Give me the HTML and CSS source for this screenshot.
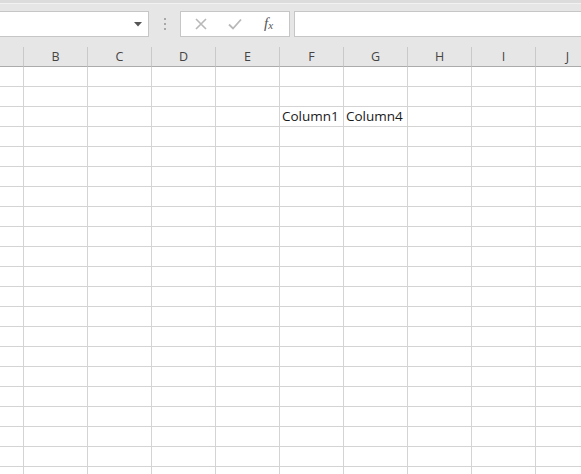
FILE: index.html
```html
<!DOCTYPE html>
<html>
<head>
<meta charset="utf-8">
<link rel="stylesheet" href="styles.css">
</head>
<body>
<div class="toolbar">
  <div class="namebox">
    <svg class="arrow" width="8" height="5" viewBox="0 0 8 5"><path d="M0 0H8L4 4.5Z" fill="#555"/></svg>
  </div>
  <div class="grip"><span></span><span></span><span></span></div>
  <div class="buttons">
    <svg class="btn" width="12" height="12" viewBox="0 0 12 12"><path d="M1 1L11 11M11 1L1 11" stroke="#b8b8b8" stroke-width="1.6" fill="none"/></svg>
    <svg class="btn" width="14" height="12" viewBox="0 0 14 12"><path d="M1 6.5L5 10.5L13 1.5" stroke="#b8b8b8" stroke-width="1.8" fill="none"/></svg>
    <span class="fx">f<sub>x</sub></span>
  </div>
  <div class="formula"></div>
</div>
<div class="sheet">
  <div class="h"></div><div class="h">B</div><div class="h">C</div><div class="h">D</div><div class="h">E</div><div class="h">F</div><div class="h">G</div><div class="h">H</div><div class="h">I</div><div class="h">J</div>
  <div class="c"></div><div class="c"></div><div class="c"></div><div class="c"></div><div class="c"></div><div class="c"></div><div class="c"></div><div class="c"></div><div class="c"></div><div class="c"></div>
  <div class="c"></div><div class="c"></div><div class="c"></div><div class="c"></div><div class="c"></div><div class="c"></div><div class="c"></div><div class="c"></div><div class="c"></div><div class="c"></div>
  <div class="c"></div><div class="c"></div><div class="c"></div><div class="c"></div><div class="c"></div><div class="c">Column1</div><div class="c">Column4</div><div class="c"></div><div class="c"></div><div class="c"></div>
  <div class="c"></div><div class="c"></div><div class="c"></div><div class="c"></div><div class="c"></div><div class="c"></div><div class="c"></div><div class="c"></div><div class="c"></div><div class="c"></div>
  <div class="c"></div><div class="c"></div><div class="c"></div><div class="c"></div><div class="c"></div><div class="c"></div><div class="c"></div><div class="c"></div><div class="c"></div><div class="c"></div>
  <div class="c"></div><div class="c"></div><div class="c"></div><div class="c"></div><div class="c"></div><div class="c"></div><div class="c"></div><div class="c"></div><div class="c"></div><div class="c"></div>
  <div class="c"></div><div class="c"></div><div class="c"></div><div class="c"></div><div class="c"></div><div class="c"></div><div class="c"></div><div class="c"></div><div class="c"></div><div class="c"></div>
  <div class="c"></div><div class="c"></div><div class="c"></div><div class="c"></div><div class="c"></div><div class="c"></div><div class="c"></div><div class="c"></div><div class="c"></div><div class="c"></div>
  <div class="c"></div><div class="c"></div><div class="c"></div><div class="c"></div><div class="c"></div><div class="c"></div><div class="c"></div><div class="c"></div><div class="c"></div><div class="c"></div>
  <div class="c"></div><div class="c"></div><div class="c"></div><div class="c"></div><div class="c"></div><div class="c"></div><div class="c"></div><div class="c"></div><div class="c"></div><div class="c"></div>
  <div class="c"></div><div class="c"></div><div class="c"></div><div class="c"></div><div class="c"></div><div class="c"></div><div class="c"></div><div class="c"></div><div class="c"></div><div class="c"></div>
  <div class="c"></div><div class="c"></div><div class="c"></div><div class="c"></div><div class="c"></div><div class="c"></div><div class="c"></div><div class="c"></div><div class="c"></div><div class="c"></div>
  <div class="c"></div><div class="c"></div><div class="c"></div><div class="c"></div><div class="c"></div><div class="c"></div><div class="c"></div><div class="c"></div><div class="c"></div><div class="c"></div>
  <div class="c"></div><div class="c"></div><div class="c"></div><div class="c"></div><div class="c"></div><div class="c"></div><div class="c"></div><div class="c"></div><div class="c"></div><div class="c"></div>
  <div class="c"></div><div class="c"></div><div class="c"></div><div class="c"></div><div class="c"></div><div class="c"></div><div class="c"></div><div class="c"></div><div class="c"></div><div class="c"></div>
  <div class="c"></div><div class="c"></div><div class="c"></div><div class="c"></div><div class="c"></div><div class="c"></div><div class="c"></div><div class="c"></div><div class="c"></div><div class="c"></div>
  <div class="c"></div><div class="c"></div><div class="c"></div><div class="c"></div><div class="c"></div><div class="c"></div><div class="c"></div><div class="c"></div><div class="c"></div><div class="c"></div>
  <div class="c"></div><div class="c"></div><div class="c"></div><div class="c"></div><div class="c"></div><div class="c"></div><div class="c"></div><div class="c"></div><div class="c"></div><div class="c"></div>
  <div class="c"></div><div class="c"></div><div class="c"></div><div class="c"></div><div class="c"></div><div class="c"></div><div class="c"></div><div class="c"></div><div class="c"></div><div class="c"></div>
  <div class="c"></div><div class="c"></div><div class="c"></div><div class="c"></div><div class="c"></div><div class="c"></div><div class="c"></div><div class="c"></div><div class="c"></div><div class="c"></div>
  <div class="c"></div><div class="c"></div><div class="c"></div><div class="c"></div><div class="c"></div><div class="c"></div><div class="c"></div><div class="c"></div><div class="c"></div><div class="c"></div>
</div>
</body>
</html>
```

FILE: styles.css
```css
html, body {
  margin: 0;
  padding: 0;
  overflow: hidden;
  background: #ffffff;
  font-family: "Open Sans", "Liberation Sans", Arial, sans-serif;
  font-size: 13px;
  color: #222;
}

.toolbar {
  height: 47px;
  box-sizing: border-box;
  background: #e6e6e6;
  border-top: 3px solid #dcdcdc;
  box-shadow: inset 0 1px 0 #f2f2f2;
  padding-top: 8px;
  display: flex;
  align-items: flex-start;
}

.namebox {
  margin-left: -1px;
  width: 150px;
  height: 26px;
  box-sizing: border-box;
  background: #fff;
  border: 1px solid #c6c6c6;
  display: flex;
  align-items: center;
  justify-content: flex-end;
  padding-right: 6px;
}

.grip {
  width: 31px;
  height: 26px;
  display: flex;
  flex-direction: column;
  align-items: center;
  justify-content: center;
  gap: 3px;
}
.grip span {
  width: 2px;
  height: 2px;
  background: #a8a8a8;
}

.buttons {
  width: 110px;
  height: 26px;
  box-sizing: border-box;
  background: #fff;
  border: 1px solid #c6c6c6;
  display: flex;
  align-items: center;
  padding-left: 14px;
}
.buttons .btn:first-child { margin-right: 21px; }
.fx {
  margin-left: 22px;
  font-family: "Liberation Serif", "Times New Roman", serif;
  font-style: italic;
  font-size: 15px;
  color: #555;
  line-height: 14px;
}
.fx sub {
  font-size: 11px;
  vertical-align: -1px;
}

.formula {
  margin-left: 4px;
  flex: 1;
  height: 26px;
  box-sizing: border-box;
  background: #fff;
  border: 1px solid #c6c6c6;
  border-right: none;
}

.sheet {
  display: grid;
  grid-template-columns: 24px repeat(9, 64px);
  grid-auto-rows: 20px;
}

.h {
  background: #e6e6e6;
  border-right: 1px solid #c9c9c9;
  border-bottom: 1px solid #ababab;
  box-sizing: border-box;
  text-align: center;
  line-height: 19px;
  color: #444;
  font-size: 12.5px;
}

.c {
  border-right: 1px solid #d4d4d4;
  border-bottom: 1px solid #d4d4d4;
  box-sizing: border-box;
  line-height: 19px;
  padding-left: 2px;
  white-space: nowrap;
  color: #1a1a1a;
  font-size: 13.5px;
}
```
